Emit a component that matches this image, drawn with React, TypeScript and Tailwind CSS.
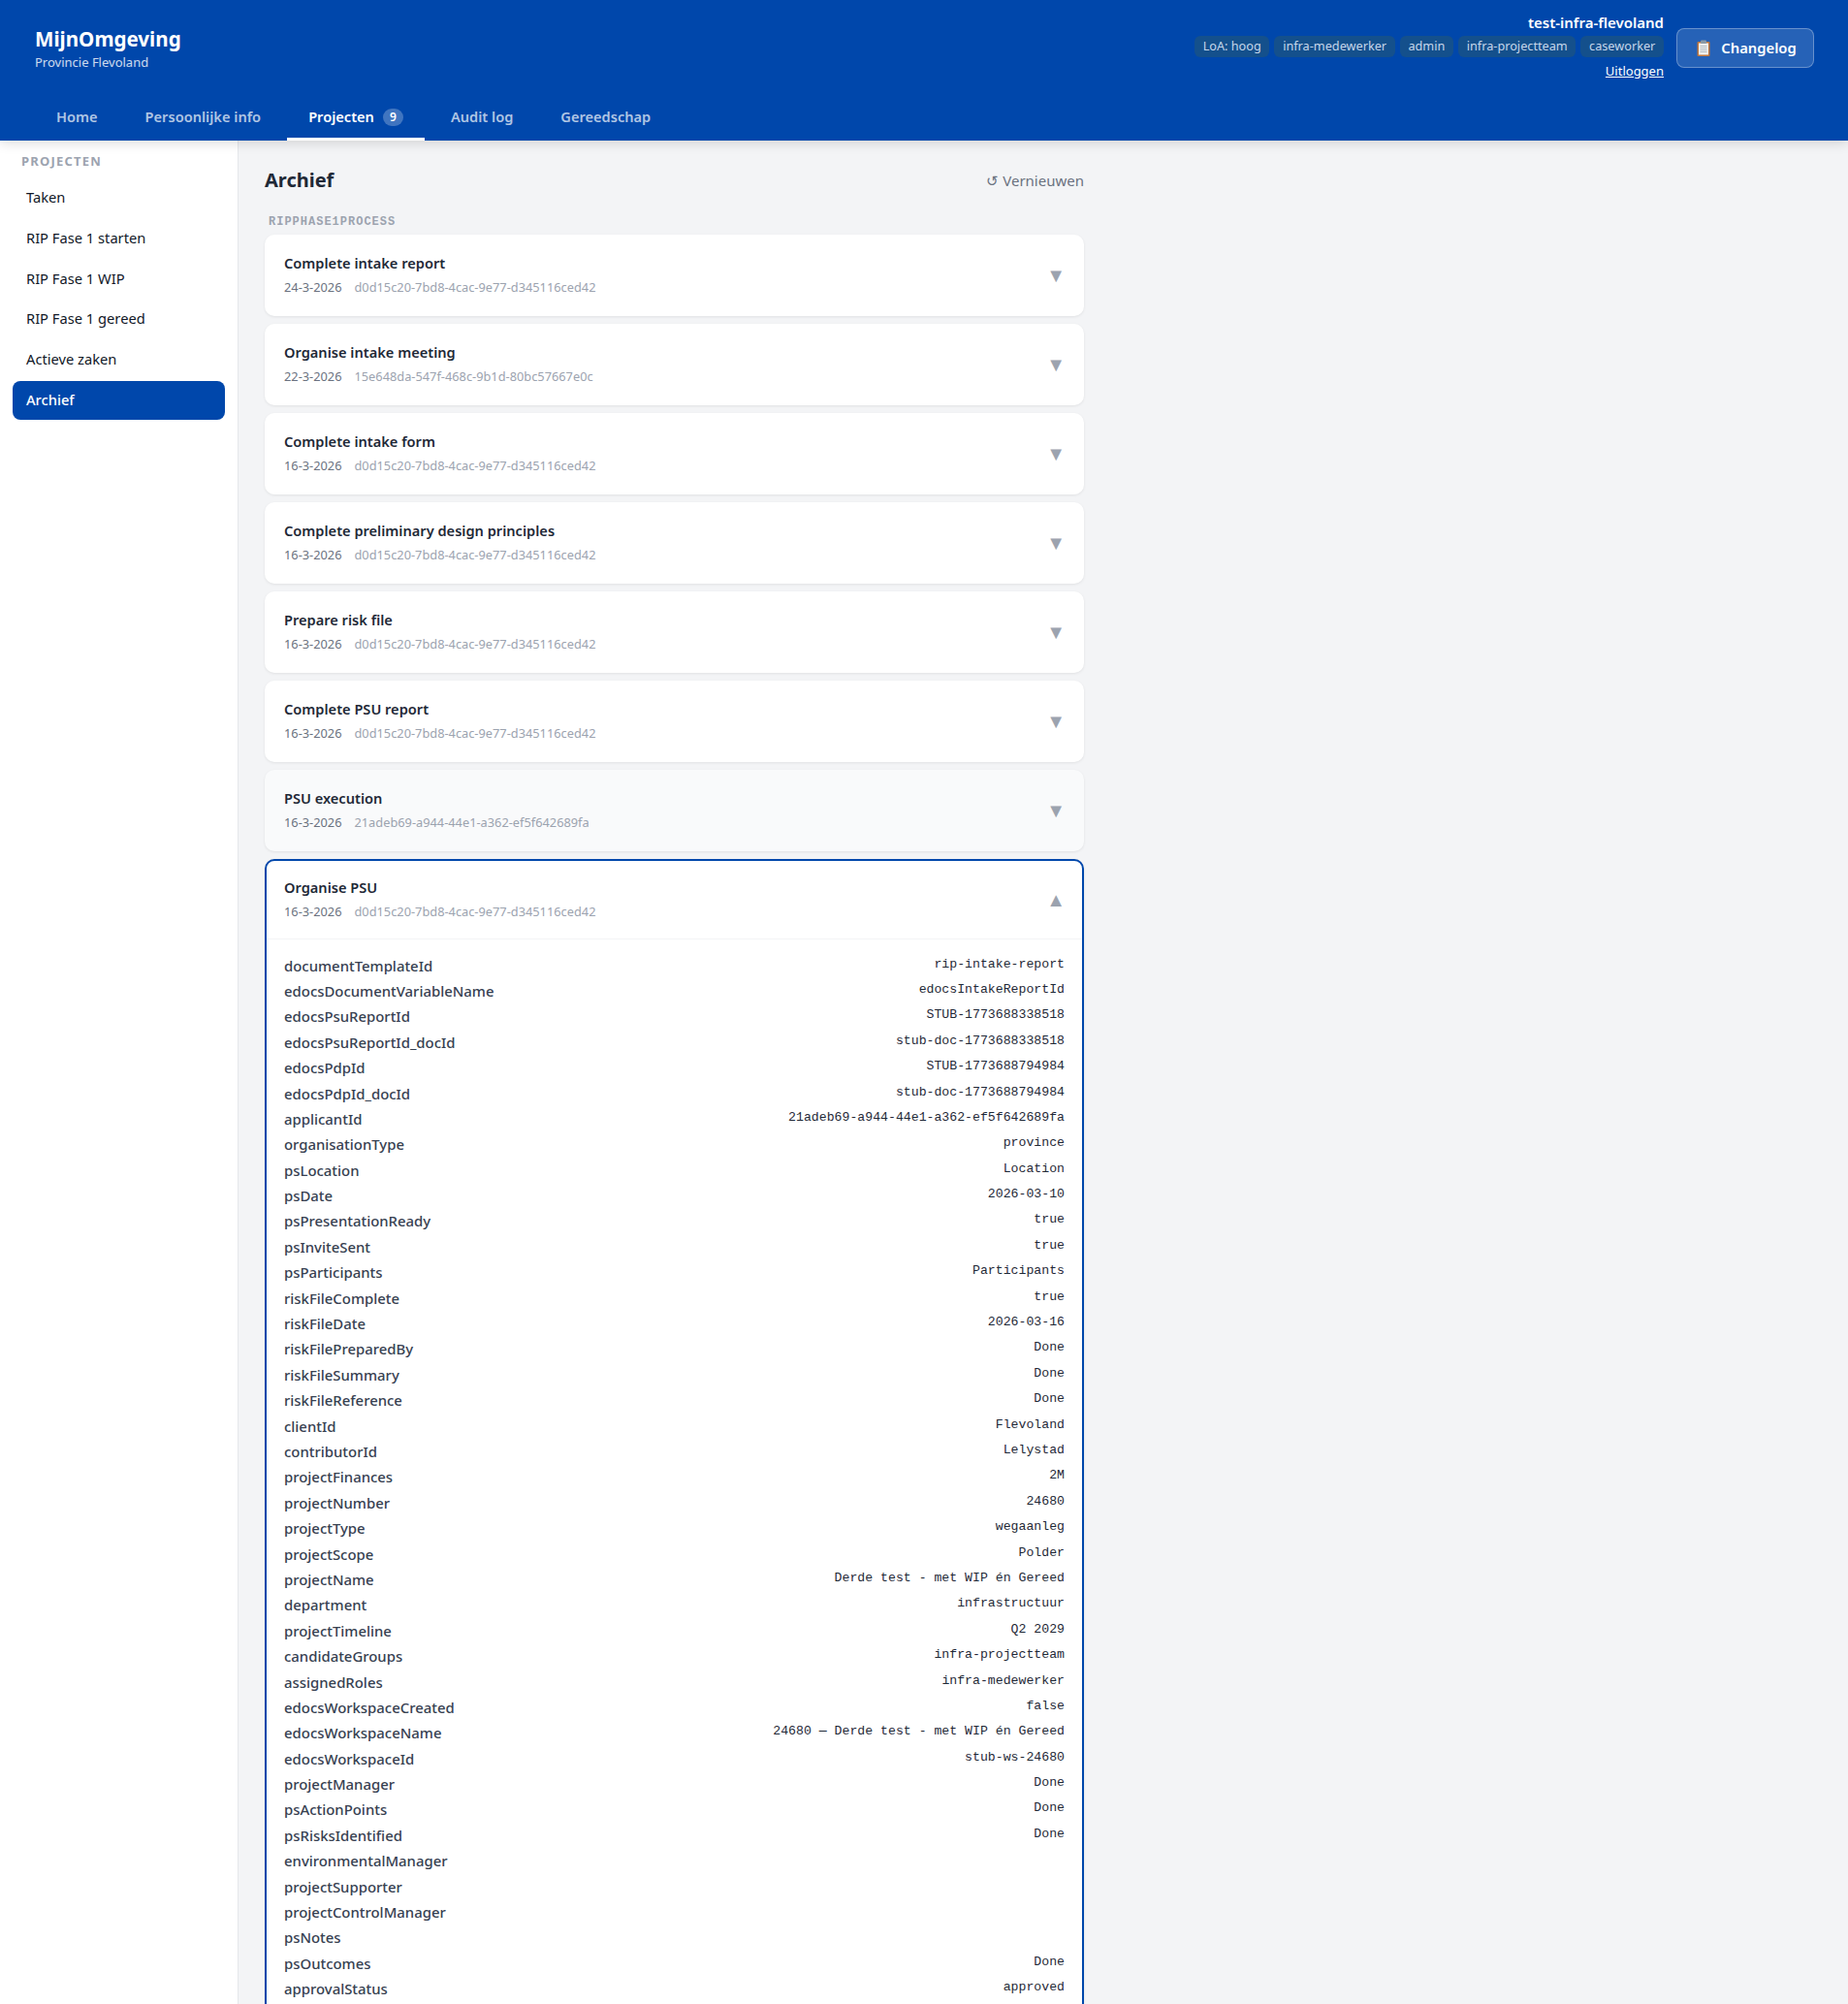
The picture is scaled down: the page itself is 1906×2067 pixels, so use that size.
const font = { fontFamily: '"Noto Sans", sans-serif' };

const tabs = ["Home", "Persoonlijke info", "Projecten", "Audit log", "Gereedschap"];
const tags = ["LoA: hoog", "infra-medewerker", "admin", "infra-projectteam", "caseworker"];
const nav = ["Taken", "RIP Fase 1 starten", "RIP Fase 1 WIP", "RIP Fase 1 gereed", "Actieve zaken", "Archief"];
const tasks: [string, string, string][] = [
  ["Complete intake report", "24-3-2026", "d0d15c20-7bd8-4cac-9e77-d345116ced42"],
  ["Organise intake meeting", "22-3-2026", "15e648da-547f-468c-9b1d-80bc57667e0c"],
  ["Complete intake form", "16-3-2026", "d0d15c20-7bd8-4cac-9e77-d345116ced42"],
  ["Complete preliminary design principles", "16-3-2026", "d0d15c20-7bd8-4cac-9e77-d345116ced42"],
  ["Prepare risk file", "16-3-2026", "d0d15c20-7bd8-4cac-9e77-d345116ced42"],
  ["Complete PSU report", "16-3-2026", "d0d15c20-7bd8-4cac-9e77-d345116ced42"],
  ["PSU execution", "16-3-2026", "21adeb69-a944-44e1-a362-ef5f642689fa"],
];
const rows: [string, string][] = [
  ["documentTemplateId", "rip-intake-report"],
  ["edocsDocumentVariableName", "edocsIntakeReportId"],
  ["edocsPsuReportId", "STUB-1773688338518"],
  ["edocsPsuReportId_docId", "stub-doc-1773688338518"],
  ["edocsPdpId", "STUB-1773688794984"],
  ["edocsPdpId_docId", "stub-doc-1773688794984"],
  ["applicantId", "21adeb69-a944-44e1-a362-ef5f642689fa"],
  ["organisationType", "province"],
  ["psLocation", "Location"],
  ["psDate", "2026-03-10"],
  ["psPresentationReady", "true"],
  ["psInviteSent", "true"],
  ["psParticipants", "Participants"],
  ["riskFileComplete", "true"],
  ["riskFileDate", "2026-03-16"],
  ["riskFilePreparedBy", "Done"],
  ["riskFileSummary", "Done"],
  ["riskFileReference", "Done"],
  ["clientId", "Flevoland"],
  ["contributorId", "Lelystad"],
  ["projectFinances", "2M"],
  ["projectNumber", "24680"],
  ["projectType", "wegaanleg"],
  ["projectScope", "Polder"],
  ["projectName", "Derde test - met WIP én Gereed"],
  ["department", "infrastructuur"],
  ["projectTimeline", "Q2 2029"],
  ["candidateGroups", "infra-projectteam"],
  ["assignedRoles", "infra-medewerker"],
  ["edocsWorkspaceCreated", "false"],
  ["edocsWorkspaceName", "24680 — Derde test - met WIP én Gereed"],
  ["edocsWorkspaceId", "stub-ws-24680"],
  ["projectManager", "Done"],
  ["psActionPoints", "Done"],
  ["psRisksIdentified", "Done"],
  ["environmentalManager", ""],
  ["projectSupporter", ""],
  ["projectControlManager", ""],
  ["psNotes", ""],
  ["psOutcomes", "Done"],
  ["approvalStatus", "approved"],
];

function Clipboard() {
  return (
    <svg width="14" height="17" viewBox="0 0 14 17" className="shrink-0">
      <rect x="0.5" y="2" width="13" height="15" rx="1" fill="#c0763c" />
      <rect x="2" y="3.5" width="10" height="12" fill="#f1f1ef" />
      <rect x="4" y="0.5" width="6" height="3.5" rx="1" fill="#8a9aa6" />
      <path d="M3.5 6.5h7M3.5 8.5h7M3.5 10.5h7M3.5 12.5h7" stroke="#a9b4bd" strokeWidth="0.9" />
    </svg>
  );
}

function Meta({ date, id }: { date: string; id: string }) {
  return (
    <div className="mt-[3px] flex gap-[13px] text-[12.8px] leading-[21px]">
      <span className="text-[#6b7280]">{date}</span>
      <span className="text-[#9ca3af]">{id}</span>
    </div>
  );
}

function Chevron({ up }: { up?: boolean }) {
  return <span className="text-[20px] leading-none text-[#9ca3af]">{up ? "▲" : "▼"}</span>;
}

export default function App() {
  return (
    <div className="flex h-screen flex-col overflow-hidden bg-[#f3f4f6]" style={font}>
      <header className="relative z-10 h-[145px] shrink-0 bg-[#0047ab] shadow-[0_2px_12px_rgba(0,0,0,0.15)]">
        <div className="flex h-[100px] items-start justify-between pl-9 pr-[35px]">
          <div className="pt-[26px]">
            <div className="text-[20.6px] font-bold leading-[29px] text-white">MijnOmgeving</div>
            <div className="text-[13px] leading-[18px] text-white/80">Provincie Flevoland</div>
          </div>
          <div className="flex items-start gap-[13px] pt-[12px]">
            <div className="flex flex-col items-end">
              <div className="text-[15px] font-semibold leading-[22px] text-white">test-infra-flevoland</div>
              <div className="mt-[3px] flex gap-[5px]">
                {tags.map((t) => (
                  <span key={t} className="flex h-[22px] items-center rounded-md bg-[#14508c] px-[8.7px] text-[12.7px] text-[#c5d6ea]">{t}</span>
                ))}
              </div>
              <a className="mt-[4px] text-[13px] leading-[20px] text-white underline">Uitloggen</a>
            </div>
            <button className="mt-[17px] flex h-[41px] w-[142px] items-center justify-center gap-[11px] rounded-lg border border-white/30 bg-white/15 pb-[1px] pl-[3px] text-[14.8px] font-semibold text-white">
              <Clipboard />
              Changelog
            </button>
          </div>
        </div>
        <nav className="flex h-[45px] gap-[5px] pl-9">
          {tabs.map((t) => {
            const active = t === "Projecten";
            return (
              <div key={t} className={`flex items-center gap-[9px] border-b-[3px] px-[22px] text-[14.6px] font-semibold ${active ? "border-white text-white" : "border-transparent text-white/70"}`}>
                {t}
                {active && <span className="flex h-[18px] w-[21px] items-center justify-center rounded-full bg-white/25 text-[12px] text-white">9</span>}
              </div>
            );
          })}
        </nav>
      </header>
      <div className="flex min-h-0 flex-1">
        <aside className="w-[246px] shrink-0 border-r border-[#e5e7eb] bg-white px-[13px]">
          <div className="pl-[9px] pt-[12px] text-[13px] font-bold uppercase leading-[18px] tracking-[1.2px] text-[#9ca3af]">Projecten</div>
          <div className="mt-[9px] flex flex-col gap-[1.8px]">
            {nav.map((n) => (
              <div key={n} className={`flex h-10 items-center rounded-lg px-[14px] pb-[2px] text-[14.7px] ${n === "Archief" ? "bg-[#0047ab] font-medium text-white" : "text-[#111827]"}`}>{n}</div>
            ))}
          </div>
        </aside>
        <main className="min-w-0 flex-1 overflow-hidden pl-[27px] pt-[24px]">
          <div className="w-[845px]">
            <div className="flex h-[34px] items-center justify-between">
              <h1 className="text-[20px] font-bold text-[#1f2937]">Archief</h1>
              <button className="text-[15px] text-[#6b7280]">↺ Vernieuwen</button>
            </div>
            <div className="mt-[17px] pl-1 font-['Liberation_Mono',monospace] text-[12px] font-bold leading-[18px] tracking-[1px] text-[#9ca3af]">RIPPHASE1PROCESS</div>
            <div className="mt-[4px] flex flex-col gap-[7.95px]">
              {tasks.map(([title, date, id]) => (
                <div key={title} className={`flex h-[84px] items-center justify-between rounded-[10px] pl-[20px] pr-[19px] shadow-[0_1px_3px_rgba(0,0,0,0.08)] ${title === "PSU execution" ? "bg-[#f9fafb]" : "bg-white"}`}>
                  <div className="pb-[2px]">
                    <div className="text-[14.6px] font-semibold leading-6 text-[#1f2937]">{title}</div>
                    <Meta date={date} id={id} />
                  </div>
                  <Chevron />
                </div>
              ))}
              <div className="rounded-[10px] border-2 border-[#0047ab] bg-white pb-[40px] shadow-[0_1px_3px_rgba(0,0,0,0.08)]">
                <div className="flex h-[81px] items-center justify-between border-b border-[#f3f4f6] pl-[18px] pr-[17px]">
                  <div className="pb-[2px]">
                    <div className="text-[14.6px] font-semibold leading-6 text-[#1f2937]">Organise PSU</div>
                    <Meta date="16-3-2026" id="d0d15c20-7bd8-4cac-9e77-d345116ced42" />
                  </div>
                  <Chevron up />
                </div>
                <div className="pl-[18px] pr-[18px] pt-[15px]">
                  {rows.map(([k, v]) => (
                    <div key={k} className="flex h-[26.4px] items-start justify-between">
                      <span className="text-[14.9px] font-medium leading-[24px] text-[#374151]">{k}</span>
                      <span className="font-['Liberation_Mono',monospace] text-[13.2px] leading-[21px] text-[#1f2937]">{v}</span>
                    </div>
                  ))}
                </div>
              </div>
            </div>
          </div>
        </main>
      </div>
    </div>
  );
}
